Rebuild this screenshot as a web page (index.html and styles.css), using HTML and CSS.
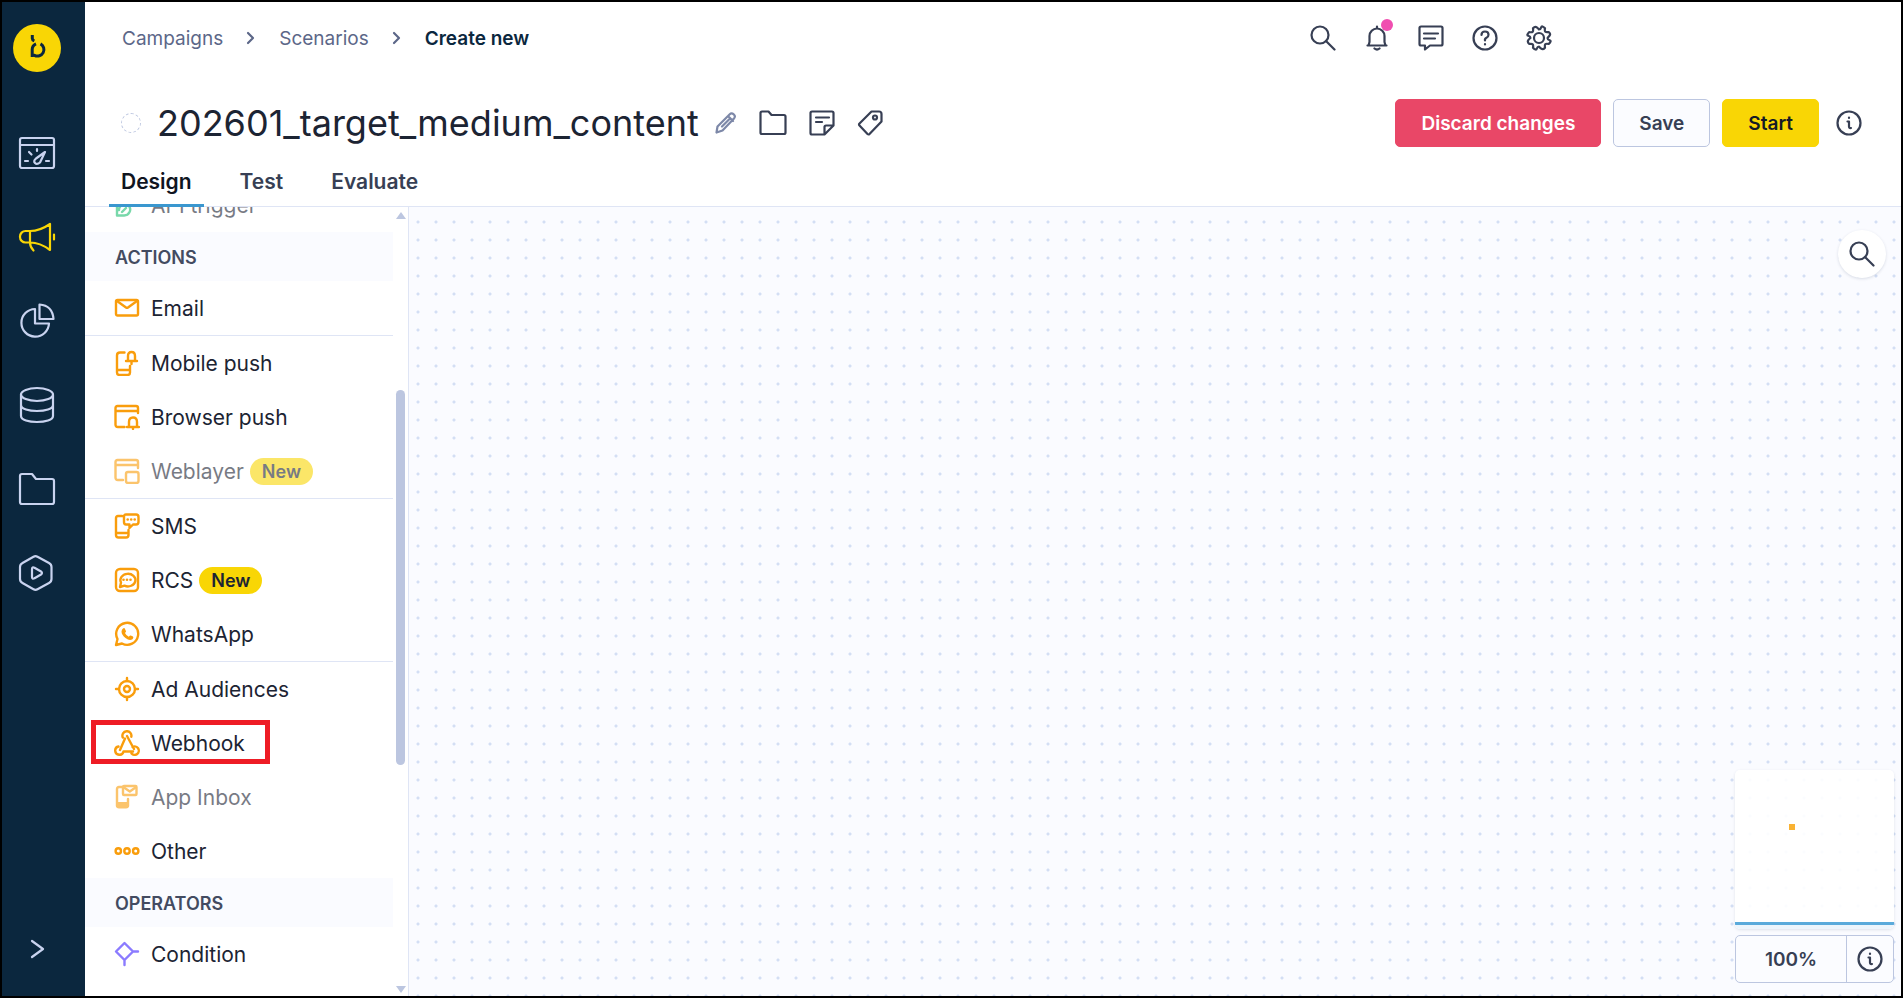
FILE: index.html
```html
<!DOCTYPE html>
<html lang="en">
  <head>
    <meta charset="UTF-8" />
    <meta name="viewport" content="width=device-width, initial-scale=1.0" />
    <title>Scenarios - Create new</title>
    <link rel="stylesheet" href="styles.css">
  </head>

  <body>
    <div class="app">
      <!-- Main navigation -->
      <nav class="sidebar" aria-label="Main">
        <a class="logo" href="#" aria-label="Home">
          <svg width="48" height="48" viewBox="0 0 48 48">
            <circle cx="24" cy="24" r="24" fill="#f9d605" stroke="none" />
            <g fill="none" stroke="#0b273e" stroke-width="3" stroke-linecap="butt">
              <path d="M19.300 11v3.500q0 1.500 2 2.500" />
              <path d="M19.200 33V25.500A6.200 6.200 0 0 1 23 19.800M27.500 19.900A6.200 6.200 0 1 1 21.500 31.300H18" />
            </g>
          </svg>
        </a>
        <a class="nav-item" href="#" aria-label="Dashboards">
          <svg width="38" height="38" viewBox="0 0 38 38">
            <rect x="2" y="4" width="34" height="30" rx="2" />
            <path d="M2 11h34M7 27h3M28 27h3M11 18l2.500 2.500M19 15v2M27 18l-9 6.500q-3 2.500-1 4.500t5-.5z" />
          </svg>
        </a>
        <a class="nav-item active" href="#" aria-label="Campaigns">
          <svg width="38" height="38" viewBox="0 0 38 38">
            <path d="M12 13H7.500a5.500 5.500 0 0 0-5.500 5.500v.500A5.500 5.500 0 0 0 7.500 24.500H12zM12 13q10 0 20-7v26q-10-7.500-20-7.500M12 24.500q0 4.500 3.500 8M36 16.500v5" />
          </svg>
        </a>
        <a class="nav-item" href="#" aria-label="Analyses">
          <svg width="38" height="38" viewBox="0 0 38 38">
            <path d="M17 7A13.800 13.800 0 1 0 31 21.500H17zM21.500 2.500V17H35.500Q34.500 3.500 21.500 2.500z" />
          </svg>
        </a>
        <a class="nav-item" href="#" aria-label="Data">
          <svg width="38" height="38" viewBox="0 0 38 38">
            <ellipse cx="19" cy="8.500" rx="16" ry="6.500" />
            <path d="M3 8.500v21.500c0 8 32 8 32 0V8.500M3 19c0 8 32 8 32 0" />
          </svg>
        </a>
        <a class="nav-item" href="#" aria-label="Assets">
          <svg width="38" height="38" viewBox="0 0 38 38">
            <path d="M2 6q0-2 2-2h10l4 5h16q2 0 2 2v21q0 2-2 2H4q-2 0-2-2z" />
          </svg>
        </a>
        <a class="nav-item" href="#" aria-label="Apps">
          <svg width="38" height="38" viewBox="0 0 38 38">
            <path d="M15.500 2.700q2-1.100 4 0l11.500 6.300q2.500 1.300 2.500 4v12q0 2.700-2.500 4l-11.500 6.300q-2 1.100-4 0L4.500 29Q2 27.700 2 25V13q0-2.700 2.500-4zM14 15q0-2.500 2.500-1.300l6.500 3.800q2 1.500 0 3l-6.500 3.800q-2.500 1.200-2.500-1.300z" />
          </svg>
        </a>
        <button class="nav-item expand" type="button" aria-label="Expand menu">
          <svg width="38" height="38" viewBox="0 0 38 38">
            <path d="M14 11l11 8-11 8" />
          </svg>
        </button>
      </nav>

      <main class="main">
        <!-- Breadcrumbs and global tools -->
        <div class="topbar">
          <nav class="breadcrumbs" aria-label="Breadcrumb">
            <a href="#">Campaigns</a>
            <svg width="10" height="14" viewBox="0 0 10 14"><path d="M2 2l5 5-5 5" /></svg>
            <a href="#">Scenarios</a>
            <svg width="10" height="14" viewBox="0 0 10 14"><path d="M2 2l5 5-5 5" /></svg>
            <span class="current">Create new</span>
          </nav>
          <div class="tools">
            <button class="icon-button" type="button" aria-label="Search">
              <svg width="26" height="26" viewBox="0 0 26 26"><circle cx="10" cy="10" r="8.500" /><path d="M16 16l8.500 8.500" /></svg>
            </button>
            <button class="icon-button" type="button" aria-label="Notifications">
              <svg width="26" height="26" viewBox="0 0 26 26"><path d="M3.500 20.500h19M4.500 20.500L5.500 17V11a7.500 7.500 0 0 1 15 0v6l1 3.500M13 1.500v2M10.500 23.500q2.500 2 5 0" /></svg>
              <span class="dot"></span>
            </button>
            <button class="icon-button" type="button" aria-label="Messages">
              <svg width="26" height="26" viewBox="0 0 26 26"><path d="M1.500 3q0-1.500 1.500-1.500h20q1.500 0 1.500 1.500v16q0 1.500-1.500 1.500H12l-5 4v-4H3q-1.500 0-1.500-1.500zM6 8.500h14M6 13.500h11" /></svg>
            </button>
            <button class="icon-button" type="button" aria-label="Help">
              <svg width="26" height="26" viewBox="0 0 26 26"><circle cx="13" cy="13" r="11.500" /><path d="M9.500 10q0-3.500 3.500-3.500t3.500 3.200q0 2-2 3T13 15.500M13 19v.5" /></svg>
            </button>
            <button class="icon-button" type="button" aria-label="Settings">
              <svg width="26" height="26" viewBox="0 0 26 26"><circle cx="13" cy="13" r="5" /><path d="M13 4.500Q14.500 4.500 15.200 2.300T19 3.300Q18.500 6 19.300 6.700T22.700 7Q25 9 23.500 10.800T21.500 13Q21.500 14.500 23.700 15.200T22.700 19Q20 18.500 19.300 19.300T19 22.700Q17 25 15.200 23.700T13 21.500Q11.500 21.500 10.800 23.700T7 22.700Q7.500 20 6.700 19.300T3.300 19Q1 17 2.300 15.200T4.500 13Q4.500 11.500 2.300 10.800T3.300 7Q6 7.500 6.700 6.700T7 3.300Q9 1 10.800 2.300T13 4.500z" /></svg>
            </button>
          </div>
        </div>

        <!-- Scenario title and actions -->
        <header class="title-bar">
          <span class="status"></span>
          <h1>202601_target_medium_content</h1>
          <div class="title-tools">
            <button class="icon-button edit" type="button" aria-label="Rename">
              <svg width="22" height="22" viewBox="0 0 22 22"><path d="M1.500 20.500l1-6L14.500 2.500q2-2 4.200-.2t.3 4.200L7.500 18.500zM13 4l5 5M15 6.500l-8 8" /></svg>
            </button>
            <button class="icon-button" type="button" aria-label="Folder">
              <svg width="28" height="26" viewBox="0 0 28 26"><path d="M1.500 3q0-1.500 1.500-1.500h6.500l3 3.500H25q1.500 0 1.500 1.500v16q0 1.500-1.500 1.500H3q-1.500 0-1.500-1.500z" /></svg>
            </button>
            <button class="icon-button" type="button" aria-label="Note">
              <svg width="26" height="26" viewBox="0 0 26 26"><path d="M3 1.500h20q1.500 0 1.500 1.500v12.500l-9 9H3q-1.500 0-1.500-1.500V3q0-1.500 1.500-1.500zM15.500 24v-7q0-1.500 1.500-1.500h7M7 7.500h13M7 12h6" /></svg>
            </button>
            <button class="icon-button" type="button" aria-label="Tag">
              <svg width="26" height="26" viewBox="0 0 26 26"><path d="M14.500 1.500H22q2.500 0 2.500 2.500v7.500L12.500 24q-1 1-2 0l-8-8.500q-1-1 0-2z" /><circle cx="18" cy="7.500" r="2" /></svg>
            </button>
          </div>
          <div class="actions">
            <button class="button danger" type="button">Discard changes</button>
            <button class="button" type="button">Save</button>
            <button class="button primary" type="button">Start</button>
            <button class="icon-button info" type="button" aria-label="Info">
              <svg width="26" height="26" viewBox="0 0 26 26"><circle cx="13" cy="13" r="11.500" /><path d="M11.500 11.500h1.500v5q0 2 2 1.500M13 7.500v.5" /></svg>
            </button>
          </div>
        </header>

        <nav class="tabs" aria-label="Scenario">
          <a class="tab active" href="#">Design</a>
          <a class="tab" href="#">Test</a>
          <a class="tab" href="#">Evaluate</a>
        </nav>

        <div class="workspace">
          <!-- Node palette -->
          <aside class="palette">
            <div class="palette-list">
              <ul>
                <li class="node trigger disabled">
                  <svg width="26" height="26" viewBox="0 0 26 26"><path d="M3 14v9.500h7a6 6 0 0 0 5-9.500M5 18a5 5 0 0 1 5-5M8 20l4-4M3 14l5-8" /></svg>
                  API trigger
                </li>
              </ul>
              <h2>ACTIONS</h2>
              <ul>
                <li class="node">
                  <svg width="26" height="26" viewBox="0 0 26 26"><rect x="2" y="5" width="22" height="15.500" rx="1.500" /><path d="M3 6l9 6.500q1 .7 2 0L23 6" /></svg>
                  Email
                </li>
                <li class="node divided">
                  <svg width="26" height="26" viewBox="0 0 26 26"><path d="M10.500 2.500H6q-3 0-3 3v17q0 2.500 2.500 2.500h8q2.500 0 2.500-2.500V16M3 20h13M12 11h11M14 11V6q0-4 3.500-4T21 6v5M17.500 12v2" /></svg>
                  Mobile push
                </li>
                <li class="node">
                  <svg width="26" height="26" viewBox="0 0 26 26"><path d="M10.500 23H4q-2.500 0-2.500-2.500V4Q1.500 2 3.500 2H22q2 0 2 2v5M1.500 7H24M13 23h12M15 23v-5q0-4.500 4-4.500t4 4.500v5M19 24v1" /></svg>
                  Browser push
                </li>
                <li class="node disabled">
                  <svg width="26" height="26" viewBox="0 0 26 26"><path d="M9 22H4q-2.500 0-2.500-2.500V4Q1.500 2 3.500 2H22q2 0 2 2v6M1.500 7H24" /><rect x="12" y="14" width="12.500" height="11" rx="2" /></svg>
                  Weblayer <span class="badge">New</span>
                </li>
                <li class="node divided">
                  <svg width="26" height="26" viewBox="0 0 26 26"><path d="M8 3H4Q2 3 2 5v17q0 2.500 2.500 2.500h7.500q2.500 0 2.500-2.500v-5M2 20h12M12 1.500h10q2.500 0 2.500 2.500v5q0 2.500-2.500 2.500h-3L15.500 15v-3.500H12q-2 0-2-2.500V4q0-2.500 2-2.500z" /><g class="solid"><circle cx="13.700" cy="6.500" r="1.300" /><circle cx="17.200" cy="6.500" r="1.300" /><circle cx="20.700" cy="6.500" r="1.300" /></g></svg>
                  SMS
                </li>
                <li class="node">
                  <svg width="26" height="26" viewBox="0 0 26 26"><rect x="2" y="2" width="22" height="22" rx="4" /><path d="M6 20l1-4.500a7.500 6.300 0 1 1 3.500 3.200z" /><g class="solid"><circle cx="9.500" cy="12.700" r="1.300" /><circle cx="13" cy="12.700" r="1.300" /><circle cx="16.500" cy="12.700" r="1.300" /></g></svg>
                  RCS <span class="badge">New</span>
                </li>
                <li class="node">
                  <svg width="26" height="26" viewBox="0 0 26 26"><path d="M2 24l1.500-6A11 11 0 1 1 8 22.500z" /><path class="solid" d="M9 7.500q1.500-1 2 .5l1 2.200q.2.800-1 1.800 1 2.500 3.800 3.700 1.200-1.500 2-1.200l2.200 1.100q1 1-.5 2.700-3 2-7-1.200T7.500 10.500q.2-2 1.500-3z" /></svg>
                  WhatsApp
                </li>
                <li class="node divided">
                  <svg width="26" height="26" viewBox="0 0 26 26"><circle cx="13" cy="13" r="8" /><circle cx="13" cy="13" r="3" /><path d="M13 2v3M13 21v3M2 13h3M21 13h3" /></svg>
                  Ad Audiences
                </li>
                <li class="node highlighted">
                  <svg width="26" height="26" viewBox="0 0 26 26"><path d="M8.800 7.500a4.500 4.500 0 1 1 8.500-.8M13 6l7 13M11 8.500L6 20M4.500 16.500a4.200 4.200 0 1 0 5 5H19M17.500 23.500a4.200 4.200 0 1 0 1-6.500" /></svg>
                  Webhook
                </li>
                <li class="node disabled">
                  <svg width="26" height="26" viewBox="0 0 26 26"><path d="M8 3H5Q3 3 3 5v17h11v-7" /><path class="solid" d="M2 18h13v3.500q0 3-3 3H5q-3 0-3-3z" /><rect x="9" y="2" width="13.500" height="9" rx="1" /><path d="M10 3.500l5.800 4L21.500 3.500" /></svg>
                  App Inbox
                </li>
                <li class="node">
                  <svg width="26" height="26" viewBox="0 0 26 26"><circle cx="4.300" cy="13" r="2.700" /><circle cx="13" cy="13" r="2.700" /><circle cx="21.700" cy="13" r="2.700" /></svg>
                  Other
                </li>
              </ul>
              <h2>OPERATORS</h2>
              <ul>
                <li class="node operator">
                  <svg width="26" height="26" viewBox="0 0 26 26"><path d="M10.500 2l8.500 8.500-8.500 8.500L2 10.500zM19 10.500h5M10.500 19v5" /></svg>
                  Condition
                </li>
              </ul>
            </div>
            <div class="scrollbar">
              <span class="arrow up"></span>
              <span class="thumb"></span>
              <span class="arrow down"></span>
            </div>
          </aside>

          <!-- Canvas -->
          <section class="canvas" aria-label="Canvas">
            <button class="canvas-search" type="button" aria-label="Search in canvas">
              <svg width="26" height="26" viewBox="0 0 26 26"><circle cx="10" cy="10" r="8.500" /><path d="M16 16l8.500 8.500" /></svg>
            </button>
            <div class="canvas-controls">
              <div class="minimap">
                <span class="minimap-node"></span>
                <span class="minimap-view"></span>
              </div>
              <div class="zoom">
                <button class="zoom-level" type="button">100%</button>
                <button class="zoom-info" type="button" aria-label="Canvas info">
                  <svg width="26" height="26" viewBox="0 0 26 26"><circle cx="13" cy="13" r="11.500" /><path d="M11.500 11.500h1.500v5q0 2 2 1.500M13 7.500v.5" /></svg>
                </button>
              </div>
            </div>
          </section>
        </div>
      </main>
    </div>
  </body>
</html>
```

FILE: styles.css
```css
*,
*::before {
  box-sizing: border-box;
}

body {
  margin: 0;
  font-family: Inter, "Liberation Sans", sans-serif;
  color: #1c2433;
}

a {
  color: inherit;
  text-decoration: none;
}

button {
  font: inherit;
  color: inherit;
  background: none;
  border: 0;
  padding: 0;
  cursor: pointer;
}

svg {
  display: block;
  flex: none;
  fill: none;
  stroke: currentColor;
  stroke-width: 2.2;
  stroke-linecap: round;
  stroke-linejoin: round;
}

ul {
  list-style: none;
  margin: 0;
  padding: 0;
}

.app {
  display: flex;
  height: 100vh;
  border: 2px solid #000;
  background: #fff;
}

/* Sidebar */
.sidebar {
  width: 83px;
  flex: none;
  display: flex;
  flex-direction: column;
  background: #0b273e;
  padding: 22px 11px 28px;
}

.logo {
  margin-bottom: 62px;
}

.nav-item {
  color: #c9d3ef;
  padding: 0 5px;
  margin-bottom: 46px;
}

.nav-item.active {
  color: #f9d605;
}

.nav-item.expand {
  margin: auto 0 0;
}

/* Main column */
.main {
  flex: 1;
  min-width: 0;
  display: flex;
  flex-direction: column;
}

.topbar {
  display: flex;
  justify-content: space-between;
  align-items: center;
  height: 72px;
  padding: 0 349px 0 37px;
}

.breadcrumbs {
  display: flex;
  align-items: center;
  gap: 23px;
  font-size: 19px;
  color: #5c6788;
}

.breadcrumbs .current {
  font-weight: 600;
  color: #0b273e;
}

.tools {
  display: flex;
  gap: 28px;
}

.icon-button {
  position: relative;
  color: #373f54;
}

.dot {
  position: absolute;
  top: -6px;
  right: -3px;
  width: 12px;
  height: 12px;
  border-radius: 50%;
  background: #f04eb0;
}

/* Title row */
.title-bar {
  display: flex;
  align-items: center;
  height: 98px;
  padding: 0 39px 0 36px;
}

.status {
  width: 20px;
  height: 20px;
  margin-right: 16px;
  border: 1px dashed #bcc6e0;
  border-radius: 50%;
}

h1 {
  margin: 0;
  font-size: 36px;
  font-weight: 400;
  line-height: 44px;
}

.title-tools {
  display: flex;
  align-items: center;
  gap: 22px;
  margin-left: 16px;
}

.edit {
  color: #7d88a8;
}

.actions {
  display: flex;
  align-items: center;
  gap: 12px;
  margin-left: auto;
}

.button {
  height: 48px;
  padding: 0 25px;
  border: 1px solid #bcc6e0;
  border-radius: 5px;
  background: #fbfcff;
  font-size: 19px;
  font-weight: 600;
  color: #373f54;
}

.button.danger {
  border-color: #e94767;
  background: #e94767;
  color: #fff;
}

.button.primary {
  border-color: #f9d605;
  background: #f9d605;
  color: #141a26;
}

.info {
  margin-left: 5px;
}

/* Tabs */
.tabs {
  display: flex;
  gap: 24px;
  padding-left: 24px;
  border-bottom: 1px solid #dfe5f5;
}

.tab {
  padding: 0 12px 12px;
  margin-bottom: -1px;
  border-bottom: 3px solid transparent;
  font-size: 21px;
  font-weight: 600;
  line-height: 20px;
  color: #373f54;
}

.tab.active {
  border-color: #3a97cf;
  color: #10151f;
}

/* Palette */
.workspace {
  flex: 1;
  min-height: 0;
  display: flex;
}

.palette {
  flex: none;
  width: 324px;
  display: flex;
  overflow: hidden;
  border-right: 1px solid #dfe5f5;
}

.palette-list {
  width: 308px;
  margin-top: -29px;
}

h2 {
  margin: 0;
  padding: 2px 0 0 30px;
  background: #fafbff;
  font-size: 18px;
  font-weight: 600;
  line-height: 47px;
  color: #434b61;
}

.node {
  position: relative;
  display: flex;
  align-items: center;
  height: 54px;
  padding-left: 29px;
  gap: 11px;
  font-size: 21px;
}

.node svg {
  color: #f99d0c;
  stroke-width: 2.4;
}

.node svg .solid {
  fill: currentColor;
  stroke: none;
}

.node.divided {
  height: 55px;
  border-top: 1px solid #dfe5f5;
}

.node.trigger svg {
  color: #1fbf72;
}

.node.operator svg {
  color: #8b7bff;
}

.node.disabled {
  opacity: 0.6;
}

.node.highlighted::before {
  content: "";
  position: absolute;
  top: 4px;
  left: 6px;
  width: 179px;
  height: 44px;
  border: 5px solid #ee1c25;
}

.badge {
  margin-left: -5px;
  padding: 0 12px;
  border-radius: 14px;
  background: #f9d605;
  font-size: 18px;
  font-weight: 600;
  line-height: 27px;
}

.scrollbar {
  width: 15px;
  display: flex;
  flex-direction: column;
  align-items: center;
  padding: 5px 0 3px;
}

.arrow {
  border: 5px solid transparent;
}

.arrow.up {
  border-top: 0;
  border-bottom: 7px solid #bcc6e0;
}

.arrow.down {
  border-bottom: 0;
  border-top: 7px solid #bcc6e0;
  margin-top: auto;
}

.thumb {
  width: 9px;
  height: 375px;
  margin-top: 171px;
  border-radius: 5px;
  background: #bcc6e0;
}

/* Canvas */
.canvas {
  flex: 1;
  display: flex;
  flex-direction: column;
  justify-content: space-between;
  align-items: flex-end;
  padding: 23px 7px 13px;
  background: #fafbff radial-gradient(circle, #d3def4 1px, transparent 2px) 0 6px / 18px 18px;
}

.canvas-search {
  display: grid;
  place-items: center;
  width: 48px;
  height: 48px;
  margin-right: 8px;
  border-radius: 50%;
  background: #fff;
  box-shadow: 0 1px 3px rgba(30, 50, 90, 0.15);
  color: #373f54;
}

.canvas-controls {
  display: flex;
  flex-direction: column;
  gap: 6px;
  width: 159px;
}

.minimap {
  position: relative;
  height: 159px;
  border-radius: 5px;
  overflow: hidden;
  background: rgba(255, 255, 255, 0.9);
  box-shadow: 0 1px 3px rgba(30, 50, 90, 0.12);
}

.minimap-node {
  position: absolute;
  top: 54px;
  left: 54px;
  width: 6px;
  height: 6px;
  background: #f9b233;
}

.minimap-view {
  position: absolute;
  top: 152px;
  left: 0;
  width: 100%;
  height: 7px;
  border-top: 3px solid #5aaadb;
  background: #edf5fc;
}

.zoom {
  display: flex;
  height: 48px;
  border: 1px solid #bcc6e0;
  border-radius: 5px;
  background: #fbfcff;
  color: #373f54;
}

.zoom-level {
  flex: 1;
  font-size: 19px;
  font-weight: 600;
}

.zoom-info {
  display: grid;
  place-items: center;
  width: 47px;
  border-left: 1px solid #bcc6e0;
}
```
